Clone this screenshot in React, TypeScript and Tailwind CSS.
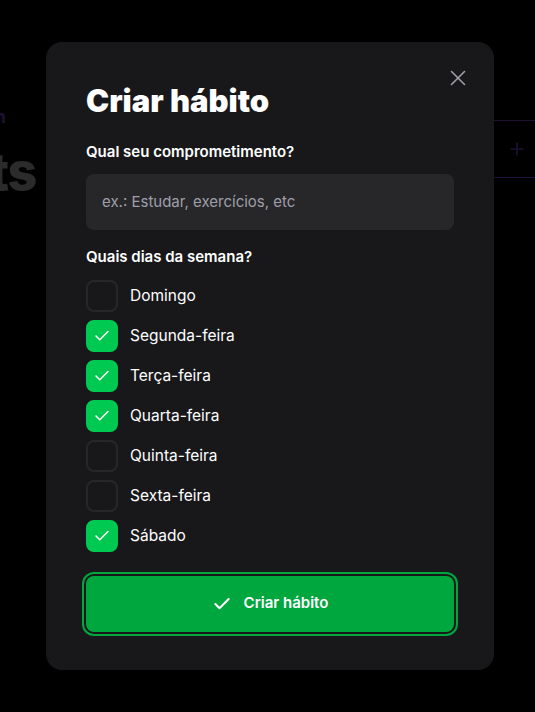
import { Check, X, Plus } from 'lucide-react'

const days = [
  { name: 'Domingo', checked: false },
  { name: 'Segunda-feira', checked: true },
  { name: 'Terça-feira', checked: true },
  { name: 'Quarta-feira', checked: true },
  { name: 'Quinta-feira', checked: false },
  { name: 'Sexta-feira', checked: false },
  { name: 'Sábado', checked: true },
]

const App = () => {
  return (
    <div className="relative w-full h-[712px] overflow-hidden bg-black text-white font-['Inter',sans-serif]">
      {/* pagina por tras */}
      <div className="flex items-start justify-between pt-[108px]">
        <div className="-ml-[123px] flex flex-col items-end">
          <span className="text-violet-500 text-lg font-bold leading-none mr-[30px]">habit n</span>
          <span className="text-[52px] font-extrabold leading-none text-zinc-300 tracking-tight mt-[20px]">Habits</span>
        </div>
        <div className="border border-violet-500 rounded-lg h-[58px] w-[200px] -mr-[120px] mt-[12px] flex items-center">
          <Plus size={20} className="text-violet-500 ml-[51px]" />
        </div>
      </div>

      {/* overlay */}
      <div className="absolute inset-0 bg-black/80 flex items-start justify-start pl-[46px] pt-[42px]">
        <div className="relative w-[448px] bg-zinc-900 rounded-2xl px-10 pt-[41px] pb-[38px]">
          <button className="absolute top-[23px] right-[23px] text-zinc-400">
            <X size={26} strokeWidth={1.5} />
          </button>

          <h1 className="text-[31px] leading-[36px] font-black">Criar hábito</h1>

          <form className="flex flex-col mt-[24px]">
            <label className="font-semibold leading-tight text-[15px]">Qual seu comprometimento?</label>
            <input
              type="text"
              placeholder="ex.: Estudar, exercícios, etc"
              className="mt-[12px] h-[56px] px-4 rounded-lg bg-zinc-800 text-white placeholder:text-zinc-400 outline-none text-[15px]"
            />

            <label className="font-semibold leading-tight text-[15px] mt-[18px]">Quais dias da semana?</label>

            <div className="flex flex-col gap-2 mt-[13px]">
              {days.map((d) => (
                <div key={d.name} className="flex items-center gap-3">
                  <div
                    className={
                      d.checked
                        ? 'h-8 w-8 rounded-lg flex items-center justify-center bg-green-500 border-2 border-green-500'
                        : 'h-8 w-8 rounded-lg flex items-center justify-center bg-zinc-900 border-2 border-zinc-800'
                    }
                  >
                    {d.checked && <Check size={18} strokeWidth={2} className="text-white" />}
                  </div>
                  <span className="text-[15.5px] leading-tight">{d.name}</span>
                </div>
              ))}
            </div>

            <button
              type="button"
              className="mt-6 h-[56px] rounded-lg bg-green-600 flex items-center justify-center gap-3 font-semibold text-[15px] ring-2 ring-green-600 ring-offset-2 ring-offset-zinc-900"
            >
              <Check size={20} strokeWidth={2.5} />
              Criar hábito
            </button>
          </form>
        </div>
      </div>
    </div>
  )
}

export default App
